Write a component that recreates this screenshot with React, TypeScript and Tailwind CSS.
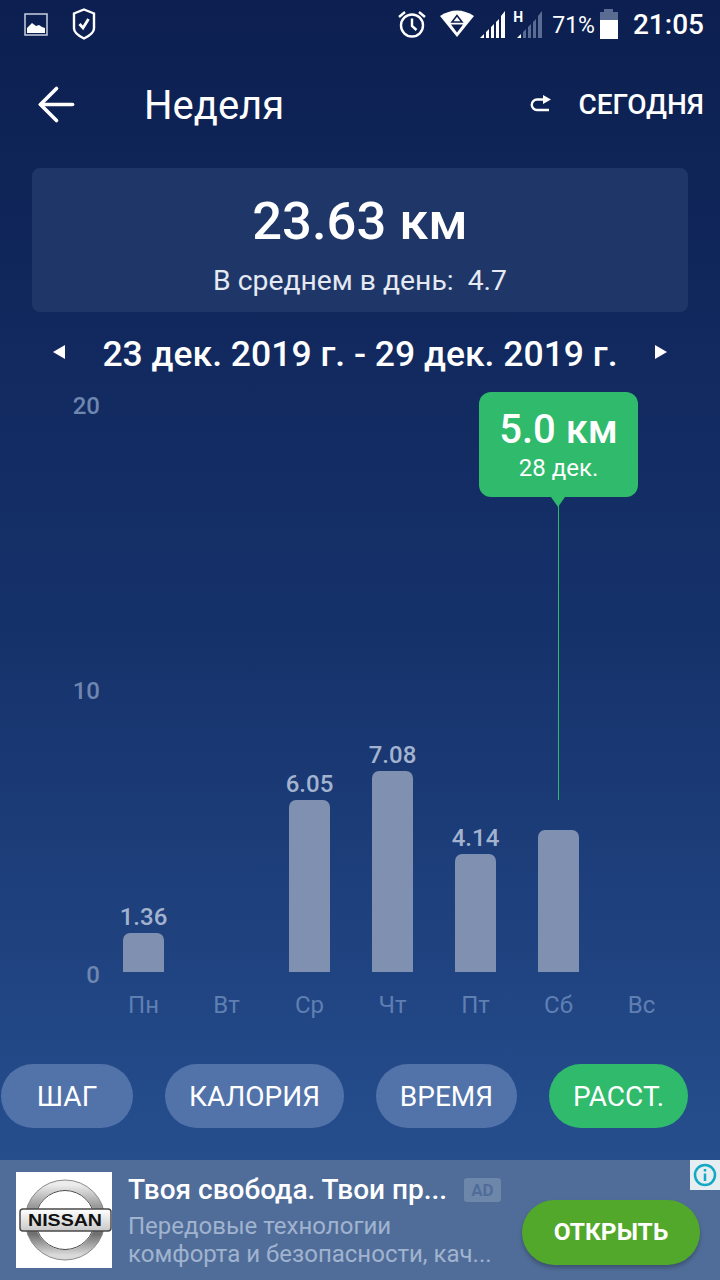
import { ArrowLeft } from "lucide-react"

const days = [
  { label: "Пн", value: "1.36", height: 39 },
  { label: "Вт", value: "", height: 0 },
  { label: "Ср", value: "6.05", height: 172 },
  { label: "Чт", value: "7.08", height: 201 },
  { label: "Пт", value: "4.14", height: 118 },
  { label: "Сб", value: "", height: 142 },
  { label: "Вс", value: "", height: 0 },
]

const tabs = [
  { label: "ШАГ", width: "w-[132px]" },
  { label: "КАЛОРИЯ", width: "w-[179px]" },
  { label: "ВРЕМЯ", width: "w-[141px]" },
]

function StatusBar() {
  return (
    <div className="flex h-[50px] items-center pl-[24px] pr-[16px] text-white">
      <svg width="24" height="23" viewBox="0 0 24 23" className="mb-[2px]">
        <rect x="1" y="1" width="22" height="21" fill="none" stroke="#c9d0de" strokeWidth="1.500" />
        <path d="M3 20v-5l5-5 4 3 3-1 3 2 3 1v5z" fill="#fff" />
      </svg>
      <svg width="24" height="32" viewBox="0 0 24 32" fill="none" className="mb-[2px] ml-[24px]">
        <path d="M12 1.500l10 4v15c0 4-5 7.500-10 10-5-2.500-10-6-10-10v-15z" stroke="#fff" strokeWidth="2.400" />
        <path d="M7.500 16l3.500 4 5.500-9" stroke="#fff" strokeWidth="2.800" />
      </svg>
      <div className="ml-auto flex items-center">
        <svg width="30" height="30" viewBox="0 0 30 30" fill="none" stroke="#fff" strokeWidth="2.400" className="mb-[2px]">
          <circle cx="15" cy="16.500" r="11" />
          <path d="M15 9.500v7.500l4.500 4" />
          <path d="M2 8l6-5M28 8l-6-5" />
        </svg>
        <svg width="34" height="28" viewBox="0 0 34 28" className="mb-[2px] ml-[13px]">
          <path d="M0 6Q17 -5 34 6L17 27z" fill="#fff" />
          <path d="M17 5.500l-5 6.500h10z" fill="none" stroke="#0c1f50" strokeWidth="1.600" />
          <path d="M11 14.500h12l-6 8z" fill="#0c1f50" />
        </svg>
        <svg width="28" height="28" viewBox="0 0 28 28" className="mb-[2px] ml-[5px]" fill="#fff">
          <path d="M1 28l4-4v4zM7 28v-6l3-3v9zM12 28v-11l3-3v14zM17 28v-16l3-3v19zM22 28V6l4-5v27z" />
        </svg>
        <div className="relative mb-[2px] ml-[9px] h-[28px] w-[28px]">
          <svg width="28" height="28" viewBox="0 0 28 28" fill="#5b6c92">
            <path d="M1 28l4-4v4z" fill="#fff" />
            <path d="M7 28v-6l3-3v9zM12 28v-11l3-3v14zM17 28v-16l3-3v19zM22 28V6l4-5v27z" />
          </svg>
          <span className="absolute left-[-3px] top-[-1px] font-['Roboto',sans-serif] text-[14px] font-bold leading-[16px]">H</span>
        </div>
        <span className="ml-[8px] font-['Roboto',sans-serif] text-[23px] leading-none">71%</span>
        <div className="mb-[2px] ml-[5px] flex h-[30px] w-[18px] flex-col items-center">
          <div className="h-[3px] w-[9px] bg-[#5b6c92]" />
          <div className="h-[8px] w-[18px] bg-[#5b6c92]" />
          <div className="h-[19px] w-[18px] bg-white" />
        </div>
        <span className="ml-[15px] font-['Roboto',sans-serif] text-[28px] font-medium leading-none">21:05</span>
      </div>
    </div>
  )
}

function Header() {
  return (
    <div className="flex h-[108px] items-center pl-[29px] pr-[16px] text-white">
      <ArrowLeft size={55} strokeWidth={1.600} />
      <h1 className="ml-[60px] mt-[4px] font-['Roboto',sans-serif] text-[40px] leading-none">Неделя</h1>
      <svg width="24" height="20" viewBox="0 0 24 20" fill="none" className="ml-auto">
        <path d="M14 5.500H8a5 5 0 0 0 0 10.500h12" stroke="#fff" strokeWidth="2.400" />
        <path d="M14 1l8 4.500-8 4.500z" fill="#fff" />
      </svg>
      <span className="ml-[25px] mt-[2px] font-['Roboto',sans-serif] text-[28px] font-medium leading-none">СЕГОДНЯ</span>
    </div>
  )
}

function Chart() {
  return (
    <div className="relative mt-[16px] flex h-[640px]">
      <div className="flex h-[599px] w-[102px] flex-col justify-between pr-[2px] pt-[2px] text-right font-['Roboto',sans-serif] text-[24px] font-medium leading-[28px] text-[#6f86b0]">
        <span>20</span>
        <span>10</span>
        <span>0</span>
      </div>
      <div className="grid flex-1 grid-cols-[repeat(7,83px)]">
        {days.map((day) => (
          <div key={day.label} className="flex flex-col items-center">
            <div className="flex h-[582px] w-full flex-col items-center justify-end">
              {day.value && (
                <span className="mb-[2px] font-['Roboto',sans-serif] text-[24px] font-medium leading-[28px] text-[#a3b3cf]">
                  {day.value}
                </span>
              )}
              <div className="w-[41px] rounded-t-[7px] bg-[#7f90b1]" style={{ height: day.height }} />
            </div>
            <span className="mt-[19px] font-['Roboto',sans-serif] text-[24px] leading-[28px] text-[#5f7fb3]">
              {day.label}
            </span>
          </div>
        ))}
      </div>
      {/* Selected day tooltip */}
      <div className="absolute left-[479px] top-[2px] flex h-[105px] w-[159px] flex-col items-center rounded-[12px] bg-[#2fba6c] pt-[15px] font-['Roboto',sans-serif] text-white">
        <span className="text-[40px] font-medium leading-[46px]">5.0 км</span>
        <span className="mt-[1px] text-[24px] leading-[28px]">28 дек.</span>
        <div className="absolute left-[72px] top-[105px] h-0 w-0 border-x-[7px] border-t-[10px] border-x-transparent border-t-[#2fba6c]" />
      </div>
      <div className="absolute left-[558px] top-[115px] h-[295px] w-px bg-[#2fba6c]" />
    </div>
  )
}

function NissanLogo() {
  return (
    <svg width="96" height="96" viewBox="0 0 96 96" className="shrink-0 bg-white">
      <defs>
        <linearGradient id="chrome" x1="0" y1="0" x2="0" y2="1">
          <stop offset="0" stopColor="#ececec" />
          <stop offset="0.3" stopColor="#9a9a9a" />
          <stop offset="0.7" stopColor="#6f6f6f" />
          <stop offset="1" stopColor="#dadada" />
        </linearGradient>
        <linearGradient id="plate" x1="0" y1="0" x2="0" y2="1">
          <stop offset="0" stopColor="#ffffff" />
          <stop offset="1" stopColor="#c9c9c9" />
        </linearGradient>
      </defs>
      <circle cx="49" cy="48" r="35" fill="none" stroke="url(#chrome)" strokeWidth="10" />
      <circle cx="49" cy="48" r="29.500" fill="none" stroke="#4a4a4a" strokeWidth="1" />
      <circle cx="49" cy="48" r="40" fill="none" stroke="#8a8a8a" strokeWidth="1" />
      <rect x="4" y="37" width="91" height="22" rx="3" fill="url(#plate)" stroke="#4a4a4a" strokeWidth="1.500" />
      <text x="49" y="54" textAnchor="middle" fontFamily="Liberation Sans, sans-serif" fontWeight="700" fontSize="16" textLength="74" lengthAdjust="spacingAndGlyphs" fill="#111">NISSAN</text>
    </svg>
  )
}

function AdBanner() {
  return (
    <div className="relative mt-auto flex h-[120px] items-start bg-[#506d99] pl-[16px] pt-[12px] font-['Roboto',sans-serif]">
      <NissanLogo />
      <div className="ml-[16px] flex w-[378px] flex-col">
        <div className="flex items-center">
          <span className="text-[28px] font-medium leading-[36px] text-white">Твоя свобода. Твои пр...</span>
          <span className="ml-[17px] rounded-[3px] bg-[#6d87ab] px-[7px] text-[17px] font-bold leading-[24px] text-[#506d99]">AD</span>
        </div>
        <span className="mt-[4px] text-[24px] leading-[28px] text-[#a0b3cf]">Передовые технологии</span>
        <span className="text-[24px] leading-[28px] text-[#a0b3cf]">комфорта и безопасности, кач...</span>
      </div>
      <div className="ml-[16px] mt-[28px] flex h-[65px] w-[178px] items-center justify-center rounded-full bg-[#52a82a] text-[24.500px] font-bold text-white shadow-[0_3px_4px_rgba(0,0,0,0.25)]">
        ОТКРЫТЬ
      </div>
      <div className="absolute right-0 top-0 flex h-[30px] w-[30px] items-center justify-center bg-[#e6eef2]">
        <svg width="24" height="24" viewBox="0 0 24 24" fill="none" stroke="#13a8c4" strokeWidth="2.500">
          <circle cx="12" cy="12" r="10" />
          <path d="M12 10.500V18M12 6v2.500" />
        </svg>
      </div>
    </div>
  )
}

export default function App() {
  return (
    <div className="flex h-[1280px] w-[720px] flex-col overflow-hidden bg-gradient-to-b from-[#0c1f50] via-[#16326b] to-[#2a5596]">
      <StatusBar />
      <Header />
      {/* Summary */}
      <div className="mx-[32px] mt-[10px] flex h-[144px] flex-col items-center rounded-[8px] bg-[#1f3669] pt-[23px] font-['Roboto',sans-serif] text-white">
        <span className="text-[52.500px] font-medium leading-[60px]">23.63 км</span>
        <span className="mt-[14px] text-[28.300px] leading-[32px] text-[#e4e9f2]">В среднем в день:&nbsp; 4.7</span>
      </div>
      {/* Date range */}
      <div className="mt-[18px] flex h-[44px] items-center justify-between px-[53px] font-['Roboto',sans-serif] text-white">
        <div className="h-0 w-0 border-y-[7px] border-r-[12px] border-y-transparent border-r-white" />
        <span className="mt-[5px] text-[35.500px] font-medium leading-none">23 дек. 2019 г. - 29 дек. 2019 г.</span>
        <div className="h-0 w-0 border-y-[7px] border-l-[12px] border-y-transparent border-l-white" />
      </div>
      <Chart />
      {/* Metric tabs */}
      <div className="mt-[34px] flex h-[64px] items-stretch gap-[32px] pl-[1px] font-['Roboto',sans-serif] text-[28px] text-white">
        {tabs.map((tab) => (
          <div key={tab.label} className={`flex items-center justify-center rounded-full bg-[#5273aa] pt-[2px] ${tab.width}`}>
            {tab.label}
          </div>
        ))}
        <div className="flex w-[139px] items-center justify-center rounded-full bg-[#2fba6c] pt-[2px]">РАССТ.</div>
      </div>
      <AdBanner />
    </div>
  )
}
